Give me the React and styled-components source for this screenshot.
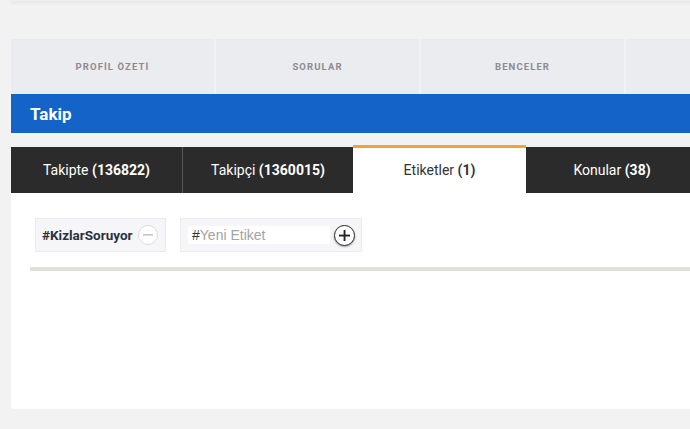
import React from "react";
import styled, { createGlobalStyle } from "styled-components";

const Global = createGlobalStyle`
  html, body { margin: 0; padding: 0; background: #f2f2f2; overflow: hidden; }
  body { font-family: Roboto, "Noto Sans", "Liberation Sans", sans-serif; }
  * { box-sizing: border-box; }
`;

const Page = styled.div`
  width: 900px;
  padding: 0 0 0 11px;
`;

const TopCard = styled.div`
  height: 1px;
  margin-left: -1px;
  background: #f0f0f0;
  box-shadow: 0 1px 4px rgba(0, 0, 0, 0.18);
`;

const NavRow = styled.div`
  display: flex;
  gap: 2px;
  margin-top: 38px;
`;

const NavTab = styled.div`
  width: 203px;
  height: 55px;
  flex: none;
  background: #ebecf0;
  display: flex;
  align-items: center;
  justify-content: center;
  font-size: 9.5px;
  font-weight: 700;
  letter-spacing: 1.1px;
  color: #8b8b8e;
`;

const Banner = styled.div`
  height: 39px;
  background: #1463c8;
  color: #fff;
  font-size: 17px;
  font-weight: 700;
  display: flex;
  align-items: center;
  padding-left: 19px;
`;

const TabRow = styled.div`
  display: flex;
  align-items: flex-end;
  margin-top: 12px;
`;

const Tab = styled.div`
  width: ${(p) => p.$w}px;
  flex: none;
  height: ${(p) => (p.$active ? 48 : 46)}px;
  background: ${(p) => (p.$active ? "#fff" : "#2b2b2b")};
  border-top: ${(p) => (p.$active ? "3px solid #f2a23a" : "none")};
  border-right: ${(p) => (p.$sep ? "1px solid #5a5a5a" : "none")};
  color: ${(p) => (p.$active ? "#333" : "#fff")};
  font-size: 14px;
  display: flex;
  align-items: center;
  justify-content: center;
  padding-bottom: ${(p) => (p.$active ? 1 : 0)}px;
  b { font-weight: 700; }
`;

const Content = styled.div`
  background: #fff;
  height: 216px;
  border-radius: 0 0 4px 4px;
  padding: 25px 0 0 19px;
`;

const TagRow = styled.div`
  display: flex;
  gap: 14px;
  padding-left: 5px;
`;

const Tag = styled.div`
  height: 34px;
  width: ${(p) => p.$w}px;
  background: #f6f6f8;
  border: 1px solid #ececee;
  display: flex;
  align-items: center;
  padding: 0 0 0 6px;
`;

const TagText = styled.span`
  font-size: 13.5px;
  font-weight: 700;
  color: #2b3140;
  flex: 1;
`;

const Circle = styled.div`
  width: ${(p) => p.$size}px;
  height: ${(p) => p.$size}px;
  border-radius: 50%;
  background: #fff;
  border: ${(p) => (p.$dark ? "1.5px solid #2a2a2a" : "1px solid #dcdcdc")};
  box-shadow: ${(p) => (p.$dark ? "0 1px 2px rgba(0,0,0,0.35)" : "none")};
  display: flex;
  align-items: center;
  justify-content: center;
  margin-right: ${(p) => p.$mr}px;
  flex: none;
`;

const InputBox = styled.div`
  flex: 1;
  height: 18px;
  margin-left: 1px;
  margin-right: 4px;
  background: #fff;
  display: flex;
  align-items: center;
  padding-left: 4px;
  font-size: 14px;
  font-family: "Liberation Sans", Arial, sans-serif;
`;

const Hash = styled.span`
  color: #333;
`;

const Placeholder = styled.span`
  color: #a3a3a3;
`;

const Rule = styled.div`
  height: 4px;
  background: #e2dfda;
  margin-top: 15px;
`;

export default function App() {
  return (
    <>
      <Global />
      <Page>
        <TopCard />
        <NavRow>
          <NavTab>PROFİL ÖZETİ</NavTab>
          <NavTab>SORULAR</NavTab>
          <NavTab>BENCELER</NavTab>
          <NavTab />
        </NavRow>
        <Banner>Takip</Banner>
        <TabRow>
          <Tab $w={172} $sep>
            Takipte&nbsp;<b>(136822)</b>
          </Tab>
          <Tab $w={170}>
            Takipçi&nbsp;<b>(1360015)</b>
          </Tab>
          <Tab $w={173} $active>
            Etiketler&nbsp;<b>(1)</b>
          </Tab>
          <Tab $w={172}>
            Konular&nbsp;<b>(38)</b>
          </Tab>
          <Tab $w={172} />
        </TabRow>
        <Content>
          <TagRow>
            <Tag $w={131}>
              <TagText>#KizlarSoruyor</TagText>
              <Circle $size={20} $mr={7}>
                <svg width="10" height="2" viewBox="0 0 10 2">
                  <rect width="10" height="1.6" fill="#c4c4c4" />
                </svg>
              </Circle>
            </Tag>
            <Tag $w={182}>
              <InputBox>
                <Hash>#</Hash>
                <Placeholder>Yeni Etiket</Placeholder>
              </InputBox>
              <Circle $size={21} $dark $mr={6}>
                <svg width="11" height="11" viewBox="0 0 11 11">
                  <rect x="4.6" y="0" width="1.9" height="11" fill="#222" />
                  <rect x="0" y="4.6" width="11" height="1.9" fill="#222" />
                </svg>
              </Circle>
            </Tag>
          </TagRow>
          <Rule />
        </Content>
      </Page>
    </>
  );
}
